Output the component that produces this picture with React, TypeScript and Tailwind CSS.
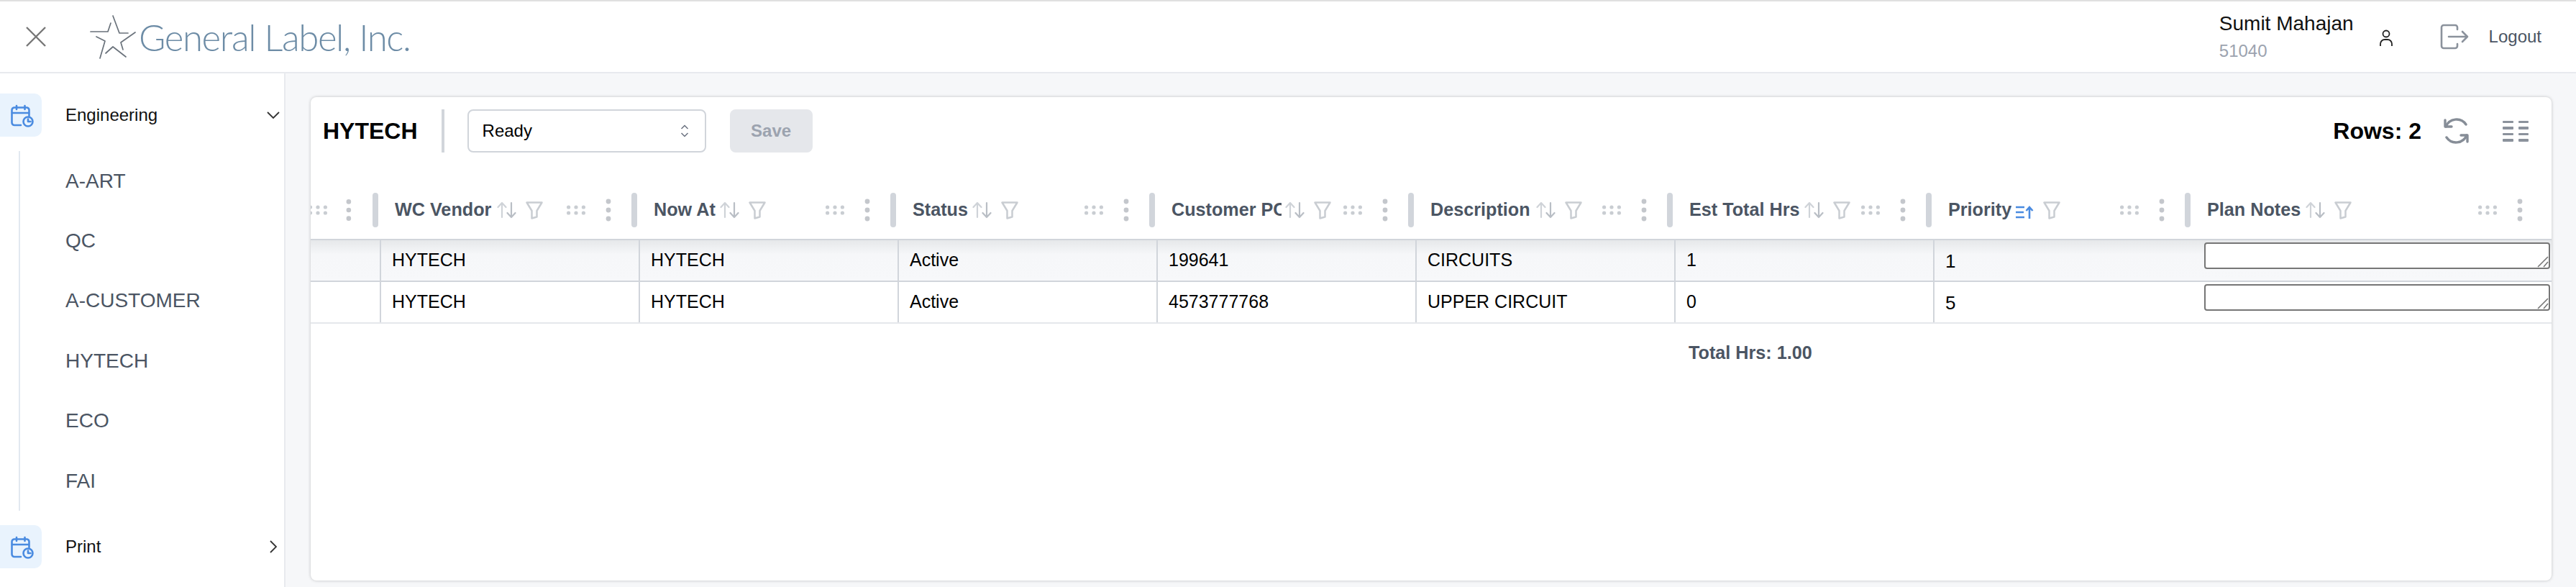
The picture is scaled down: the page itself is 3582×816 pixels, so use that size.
import { useState } from 'react';

const SUB_ITEMS = ['A-ART', 'QC', 'A-CUSTOMER', 'HYTECH', 'ECO', 'FAI'];

interface Column {
  label: string;
  labelWidth: string;
  wide?: boolean;
  sorted?: boolean;
}

const COLUMNS: Column[] = [
  { label: 'WC Vendor', labelWidth: 'w-[137px]' },
  { label: 'Now At', labelWidth: 'w-[87px]' },
  { label: 'Status', labelWidth: 'w-[78px]' },
  { label: 'Customer PO', labelWidth: 'w-[153px]' },
  { label: 'Description', labelWidth: 'w-[142px]' },
  { label: 'Est Total Hrs', labelWidth: 'w-[155px]' },
  { label: 'Priority', labelWidth: 'w-[88px]', sorted: true },
  { label: 'Plan Notes', labelWidth: 'w-[132px]', wide: true },
];

const ROWS = [
  ['HYTECH', 'HYTECH', 'Active', '199641', 'CIRCUITS', '1', '1'],
  ['HYTECH', 'HYTECH', 'Active', '4573777768', 'UPPER CIRCUIT', '0', '5'],
];

function CalendarIcon() {
  return (
    <svg className="ml-[3px] mt-[1px]" width="32" height="32" viewBox="0 0 32 32" fill="none" stroke="#4a8be0" strokeWidth="2.6" strokeLinecap="round" strokeLinejoin="round">
      <path d="M14 29H5a3.5 3.5 0 0 1-3.5-3.5V8A3.5 3.5 0 0 1 5 4.500h17A3.500 3.500 0 0 1 25.500 8v8" />
      <path d="M8 2v5M19.500 2v5M2 12h23" />
      <circle cx="24" cy="24" r="6.500" />
      <path d="M24 20.500V24h3.500" />
    </svg>
  );
}

function SortIcon({ active }: { active?: boolean }) {
  if (active) {
    return (
      <svg width="26" height="18" viewBox="0 0 26 18" fill="none" stroke="#4a8be0" strokeWidth="2.6" className="mt-[5px]">
        <path d="M1 2h12M1 9h11M1 16h12" />
        <path d="M20 18V2M15.500 7L20 2l4.500 5" />
      </svg>
    );
  }
  return (
    <svg width="27" height="24" viewBox="0 0 27 24" fill="none" stroke="#cfd3d8" strokeWidth="2.2" strokeLinecap="round" strokeLinejoin="round">
      <path d="M7 22V2M1.500 8L7 2l5.500 6" />
      <path d="M20 2v20M14.500 16l5.500 6 5.500-6" stroke="#b9bec5" />
    </svg>
  );
}

function FilterIcon() {
  return (
    <svg width="24" height="25" viewBox="0 0 24 25" fill="none" stroke="#c9cdd2" strokeWidth="2.500" strokeLinejoin="round">
      <path d="M1.500 1.500h21L15.500 13v8.500L8.500 23.500V13z" />
    </svg>
  );
}

function GripIcon() {
  return (
    <svg className="shrink-0" width="26" height="14" viewBox="0 0 26 14" fill="#c9cdd2">
      {[2.600, 13, 23.400].map((x) => (
        <g key={x}>
          <circle cx={x} cy="3" r="2.600" />
          <circle cx={x} cy="11" r="2.600" />
        </g>
      ))}
    </svg>
  );
}

function KebabIcon() {
  return (
    <svg width="8" height="32" viewBox="0 0 8 32" fill="#c4c7cc">
      <circle cx="4" cy="4" r="3.400" />
      <circle cx="4" cy="16" r="3.400" />
      <circle cx="4" cy="28" r="3.400" />
    </svg>
  );
}

function HeaderCell({ column }: { column: Column }) {
  return (
    <div className={`flex items-center shrink-0 h-[48px] ${column.wide ? 'w-[498px]' : 'w-[360px]'}`}>
      <div className="w-[8px] h-[48px] rounded-full bg-[#d1d5db] shrink-0" />
      <div className={`ml-[23px] shrink-0 overflow-hidden whitespace-nowrap text-[25.200px] font-bold text-[#4b5563] ${column.labelWidth}`}>
        {column.label}
      </div>
      <div className="ml-[5px] shrink-0 flex items-center">
        <SortIcon active={column.sorted} />
      </div>
      <div className="ml-[13px] shrink-0 flex items-center">
        <FilterIcon />
      </div>
      <div className="ml-auto mr-[28px] flex items-center gap-[28px]">
        <GripIcon />
        <KebabIcon />
      </div>
    </div>
  );
}

function Textarea() {
  return (
    <div className="relative w-[481px] h-[37px]">
      <textarea className="block w-full h-full resize-none rounded-[4px] border-2 border-[#767676] bg-white" />
      <svg className="absolute right-[2px] bottom-[2px]" width="16" height="16" viewBox="0 0 16 16" stroke="#767676" strokeWidth="1.600">
        <path d="M1 15L15 1M9 15l6-7" />
      </svg>
    </div>
  );
}

export default function App() {
  const [status] = useState('Ready');

  return (
    <div className="w-[3582px] h-[816px] flex flex-col overflow-hidden bg-[#f6f7f9] font-['Liberation_Sans',sans-serif] text-black">
      {/* Top bar */}
      <header className="h-[102px] shrink-0 flex items-center bg-white border-t-2 border-b-2 border-t-[#e0e0e0] border-b-[#e8eaee]">
        <button className="ml-[36px] text-[#777]">
          <svg className="block" width="28" height="28" viewBox="0 0 28 28" fill="none" stroke="currentColor" strokeWidth="2.400">
            <path d="M1 1l26 26M27 1L1 27" />
          </svg>
        </button>
        <div className="ml-[56px] flex items-center">
          <svg width="75" height="65" viewBox="0 0 75 65" fill="none" stroke="#6a727b" strokeWidth="1.700" strokeLinecap="round" strokeLinejoin="round">
            <path d="M37 3l9 24h12" />
            <path d="M6 25h24l4-12" />
            <path d="M68 26L48 40l3 10" />
            <path d="M14 32l12 6-7 24" />
            <path d="M27 55l10-9 18 14" />
          </svg>
          <span className="ml-[-2px] text-[51px] leading-none font-['Lato',sans-serif] font-light tracking-[-1.400px] text-[#6d8ca6]">
            General Label, Inc.
          </span>
        </div>
        <div className="ml-auto flex items-center">
          <div className="flex flex-col gap-[8px]">
            <span className="text-[28px] leading-[32px] text-[#111]">Sumit Mahajan</span>
            <span className="text-[24px] leading-[28px] text-[#9ca3af]">51040</span>
          </div>
          <svg className="ml-[36px] mt-[4px]" width="18" height="24" viewBox="0 0 18 24" fill="none" stroke="#222" strokeWidth="1.800">
            <circle cx="9" cy="6" r="4.500" />
            <path d="M1 23v-3a6 6 0 0 1 6-6h4a6 6 0 0 1 6 6v3" />
          </svg>
          <svg className="ml-[66px]" width="40" height="36" viewBox="0 0 40 36" fill="none" stroke="#8b929c" strokeWidth="2.600" strokeLinecap="round" strokeLinejoin="round">
            <path d="M24 8V5a3 3 0 0 0-3-3H5a3 3 0 0 0-3 3v26a3 3 0 0 0 3 3h16a3 3 0 0 0 3-3v-3" />
            <path d="M12 18h26M31 11l7 7-7 7" />
          </svg>
          <span className="ml-[28px] mr-[48px] text-[24px] text-[#4b5563]">Logout</span>
        </div>
      </header>

      <div className="flex flex-1 min-h-0">
        {/* Sidebar */}
        <aside className="w-[397px] shrink-0 bg-white border-r-2 border-r-[#e8eaee] pt-[28px]">
          <div className="flex items-center h-[60px]">
            <div className="w-[58px] h-[60px] flex items-center justify-center rounded-r-[10px] bg-[#e9f3fd]">
              <CalendarIcon />
            </div>
            <span className="ml-[33px] text-[24px] text-[#111]">Engineering</span>
            <svg className="ml-auto mr-[6px]" width="18" height="11" viewBox="0 0 18 11" fill="none" stroke="#333" strokeWidth="1.800">
              <path d="M1 1l8 8 8-8" />
            </svg>
          </div>
          <div className="ml-[26px] mt-[20px] h-[500px] border-l-2 border-l-[#e2e8f0] pl-[63px] flex flex-col">
            {SUB_ITEMS.map((item) => (
              <div key={item} className="h-[83.400px] shrink-0 flex items-center text-[28px] text-[#4b5563]">
                {item}
              </div>
            ))}
          </div>
          <div className="flex items-center h-[60px] mt-[20px]">
            <div className="w-[58px] h-[60px] flex items-center justify-center rounded-r-[10px] bg-[#e9f3fd]">
              <CalendarIcon />
            </div>
            <span className="ml-[33px] text-[24px] text-[#111]">Print</span>
            <svg className="ml-auto mr-[9px]" width="11" height="18" viewBox="0 0 11 18" fill="none" stroke="#333" strokeWidth="1.800">
              <path d="M1 1l8 8-8 8" />
            </svg>
          </div>
        </aside>

        {/* Main card */}
        <main className="flex-1 min-w-0 pl-[35px] pr-[34px] pt-[33px] pb-[9px]">
          <div className="h-full rounded-[8px] bg-white overflow-hidden shadow-[0_0_4px_rgba(0,0,0,0.22)]">
            <div className="h-[77px] flex items-start pt-[17px]">
              <h1 className="ml-[17px] h-[60px] flex items-center text-[32px] font-bold text-black">HYTECH</h1>
              <div className="ml-[33px] w-[4px] h-[60px] bg-[#d1d5db]" />
              <div className="ml-[32px] w-[332px] h-[60px] flex items-center justify-between rounded-[8px] border-2 border-[#d1d5db] pl-[19px] pr-[22px] text-[24px]">
                {status}
                <svg width="12" height="18" viewBox="0 0 12 18" fill="none" stroke="#6b7280" strokeWidth="1.500">
                  <path d="M1.500 6L6 1.500 10.500 6M1.500 12L6 16.500l4.500-4.500" />
                </svg>
              </div>
              <button className="ml-[33px] w-[115px] h-[60px] rounded-[8px] bg-[#e5e7eb] text-[24px] font-bold text-[#9ca3af]">Save</button>
              <div className="ml-auto h-[60px] flex items-center mr-[32px]">
                <span className="text-[32px] font-bold text-black">Rows: 2</span>
                <svg className="ml-[30px]" width="37" height="36" viewBox="0 0 37 36" fill="none" stroke="#868d97" strokeWidth="3.400" strokeLinecap="round" strokeLinejoin="round">
                  <path d="M3 3v9h9" />
                  <path d="M4 12A16 16 0 0 1 32 9" />
                  <path d="M34 33v-9h-9" />
                  <path d="M33 24A16 16 0 0 1 5 27" />
                </svg>
                <div className="ml-[46px] grid grid-cols-2 gap-x-[7px] gap-y-[5px]">
                  {Array.from({ length: 8 }).map((_, i) => (
                    <div key={i} className="w-[14.500px] h-[3.500px] rounded-[1px] bg-[#8b929c]" />
                  ))}
                </div>
              </div>
            </div>

            {/* Table */}
            <div className="mt-[56px] h-[66px] border-b-2 border-b-[#d1d5db] flex">
              <div className="w-[86px] h-[48px] shrink-0 flex items-center justify-end gap-[26px] pr-[29px]">
                <div className="w-[24px] overflow-hidden flex justify-end"><GripIcon /></div>
                <KebabIcon />
              </div>
              {COLUMNS.map((column) => (
                <HeaderCell key={column.label} column={column} />
              ))}
            </div>
            {ROWS.map((row, r) => (
              <div key={r} className={`h-[58px] flex border-b-2 ${r === 0 ? 'border-b-[#d1d5db] bg-gradient-to-b from-[#e6e8ea] via-[#f6f7f9] via-35% to-[#f7f8fa]' : 'border-b-[#e5e7eb]'}`}>
                <div className="w-[96px] shrink-0" />
                {row.map((cell, c) => (
                  <div key={c} className={`w-[360px] shrink-0 flex items-center pl-[15px] ${c === 6 ? 'text-[26px] pt-[3px]' : 'text-[25px]'} ${c === 6 ? 'border-l-2' : 'border-l-2'} border-l-[#d1d5db]`}>
                    {cell}
                  </div>
                ))}
                <div className="flex-1 min-w-0 flex items-start justify-end pr-[2px] pt-[3px]">
                  <Textarea />
                </div>
              </div>
            ))}
            <div className="mt-[22px] ml-[1916px] text-[25.200px] font-bold text-[#4b5563]">Total Hrs: 1.00</div>
          </div>
        </main>
      </div>
    </div>
  );
}
